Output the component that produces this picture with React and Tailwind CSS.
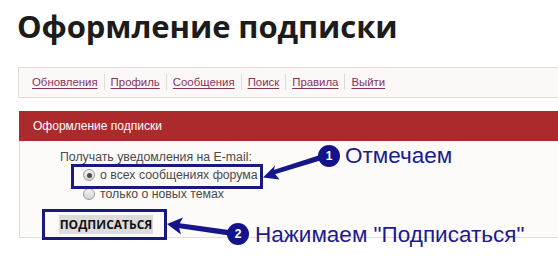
const NAV = ['Обновления', 'Профиль', 'Сообщения', 'Поиск', 'Правила', 'Выйти'];

function Radio({ checked }) {
  return (
    <span className="w-[12px] h-[12px] rounded-full border border-[#9a9a9a] bg-gradient-to-b from-[#f4f4f4] to-[#d4d4d4] flex items-center justify-center">
      {checked && <span className="w-[5px] h-[5px] rounded-full bg-[#4a4a4a]" />}
    </span>
  );
}

export default function App() {
  return (
    <div className="relative w-[558px] h-[267px] overflow-hidden bg-white font-['Liberation_Sans',Arial,sans-serif]">
      {/* Page title */}
      <h1 className="pl-[17px] pt-[6px] h-[48px] text-[31px] font-bold leading-[40px] text-[#1c1c1c] font-['Open_Sans',sans-serif] tracking-[-0.1px]">
        Оформление подписки
      </h1>

      {/* Nav bar */}
      <nav className="ml-[18px] mt-[19px] w-[560px] h-[31px] border border-[#e8d9d9] bg-[#fcf8f7] flex items-center pl-[13px] text-[11.4px]">
        {NAV.map((item, i) => (
          <div key={item} className="flex items-center">
            {i > 0 && <span className="mx-[6px] w-px h-[16px] bg-[#e2dada]" />}
            <a className="text-[#86325a] underline underline-offset-2">{item}</a>
          </div>
        ))}
      </nav>

      {/* Panel */}
      <div className="ml-[19px] mt-[13px] w-[560px]">
        <div className="h-[30px] bg-[#ac2a2c] flex items-center pl-[14px] text-white text-[12px]">
          Оформление подписки
        </div>
        <div className="h-[97px] bg-[#fdfafa] border-l border-b border-[#e6dada] pl-[40px] pt-[7px] text-[12.3px] text-[#4a4a4a]">
          <div className="h-[18px] leading-[18px]">Получать уведомления на E-mail:</div>
          <div className="pl-[23px]">
            <label className="h-[18px] flex items-center gap-[5px]">
              <Radio checked />
              <span className="leading-[18px]">о всех сообщениях форума</span>
            </label>
            <label className="h-[18px] flex items-center gap-[5px] mt-[1px]">
              <Radio />
              <span className="leading-[18px]">только о новых темах</span>
            </label>
          </div>
          <button className="mt-[12px] -ml-[1px] w-[94px] h-[19px] bg-[#dcdcdc] text-[12px] font-bold text-[#111] font-['Open_Sans',sans-serif] leading-[19px]">
            ПОДПИСАТЬСЯ
          </button>
        </div>
      </div>

      {/* Annotation overlays */}
      <div className="absolute left-[71px] top-[164px] w-[192px] h-[25px] border-[3px] border-[#1a1a7e]" />
      <div className="absolute left-[42px] top-[209px] w-[125px] h-[31px] border-[3px] border-[#1a1a7e]" />

      <svg className="absolute inset-0 pointer-events-none" width="558" height="267" viewBox="0 0 558 267">
        <g fill="#16168a">
          <polygon points="320,155 322,160 274,174.5 272,170.5" />
          <polygon points="263,177.5 275,165.5 273.5,172 279.5,179.5" />
          <polygon points="229,230 229,235.5 178,228 178,223" />
          <polygon points="167,224 183,217.5 178.5,225.5 181,234.5" />
        </g>
      </svg>

      <div className="absolute left-[318px] top-[145px] w-[22px] h-[22px] rounded-full bg-[#14148a] text-white text-[12px] font-bold flex items-center justify-center">
        1
      </div>
      <div className="absolute left-[227px] top-[223px] w-[22px] h-[22px] rounded-full bg-[#14148a] text-white text-[12px] font-bold flex items-center justify-center">
        2
      </div>

      <div className="absolute left-[345px] top-[143px] text-[22.5px] leading-[26px] text-[#1b1b8c]">Отмечаем</div>
      <div className="absolute left-[255px] top-[222px] text-[22.5px] leading-[26px] text-[#1b1b8c]">Нажимаем "Подписаться"</div>
    </div>
  );
}
